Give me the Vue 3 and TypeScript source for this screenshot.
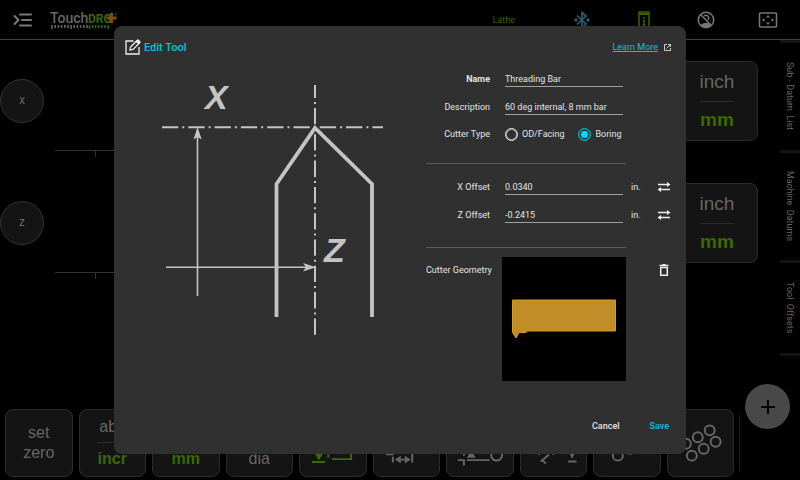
<script setup lang="ts">
import { ref } from 'vue'

interface Axis { id: string; label: string }

const axes: Axis[] = [
  { id: 'x', label: 'X' },
  { id: 'z', label: 'Z' },
]
const tabs = ['Sub - Datum  List', 'Machine  Datums', 'Tool  Offsets']

const name = ref('Threading Bar')
const description = ref('60 deg internal, 8 mm bar')
const cutterType = ref('boring')
const xOffset = ref('0.0340')
const zOffset = ref('-0.2415')
</script>

<template>
  <div class="app">
    <header class="topbar">
      <button class="plain menu" aria-label="Menu">
        <svg width="20" height="16" viewBox="0 0 20 16" fill="none" stroke="#7a7a7a" stroke-width="2" stroke-linecap="round">
          <path d="M7 2.500H18M9 8H18M7 13.500H18" />
          <path d="M1.500 4L5.500 8L1.500 12" />
        </svg>
      </button>
      <svg class="logo" width="70" height="20" viewBox="0 0 70 20" role="img" aria-label="TouchDRO">
        <text x="1" y="13" class="logo-touch">Touch</text>
        <text x="39" y="13" class="logo-dro">DRO</text>
        <path d="M62.500 3V13M57.500 8H67.500" stroke="#7a5010" stroke-width="3.200" />
        <circle cx="67" cy="4" r="1" fill="none" stroke="#444" stroke-width=".6" />
        <path d="M3 15V19M6.200 15V18M9.400 15V18M12.600 15V18M15.800 15V18M19 15V18M22 15V19M25.200 15V18M28.400 15V18M31.600 15V18M34.800 15V18M38 15V18" stroke="#666" stroke-width="1.600" />
        <path d="M40.500 15V19M43.600 15V18M46.700 15V18M49.800 15V18M52.900 15V18M56 15V18M59.200 15V19" stroke="#2f6a00" stroke-width="1.600" />
      </svg>
      <span class="mode">Lathe</span>
      <nav class="status">
        <button class="plain" aria-label="Bluetooth">
          <svg width="16" height="18" viewBox="0 0 16 18" fill="none" stroke="#285e70" stroke-width="1.700">
            <path d="M3 4.500L12 13L8 17V1.500L12 5L3 13.500" />
            <circle cx="2" cy="9" r=".8" /><circle cx="14" cy="9" r=".8" />
          </svg>
        </button>
        <button class="plain" aria-label="Device information">
          <svg width="14" height="20" viewBox="0 0 14 20" fill="none" stroke="#386300">
            <rect x="2" y="2" width="10" height="16" stroke-width="1.500" />
            <path d="M2 4H12" stroke-width="2" /><path d="M7 7V9M7 10V15M5.500 10.500H7M5.500 15H8.500" stroke-width="1.500" />
          </svg>
        </button>
        <button class="plain" aria-label="Account">
          <svg width="18" height="18" viewBox="0 0 18 18" fill="none" stroke="#777" stroke-width="1.500">
            <circle cx="9" cy="9" r="7.700" /><path d="M3.500 3.500L14.500 14.500" />
            <path d="M7 5Q9 3.500 11 5Q12.500 7 11 9" />
            <path d="M3.500 14Q9 9.500 14.500 14Q9 19 3.500 14Z" fill="#777" stroke="none" />
          </svg>
        </button>
        <button class="plain" aria-label="Full screen">
          <svg width="20" height="16" viewBox="0 0 20 16">
            <rect x="1.500" y="1" width="17" height="14" rx="1" fill="none" stroke="#777" stroke-width="1.500" />
            <path d="M10 3L12 5.500H8ZM10 13L12 10.500H8ZM4 8L6.500 6V10ZM16 8L13.500 6V10Z" fill="#777" />
          </svg>
        </button>
      </nav>
    </header>

    <div class="workspace">
      <main class="axes">
        <section v-for="axis in axes" :key="axis.id" class="axis">
          <button class="axis-name">{{ axis.label }}</button>
          <div class="scale"><span class="tick"></span></div>
          <button class="tile unit-tile"><span>inch</span><i></i><b>mm</b></button>
        </section>
      </main>
      <nav class="tabs">
        <button v-for="tab in tabs" :key="tab" class="tab">{{ tab }}</button>
      </nav>
    </div>

    <footer class="toolbar">
      <div class="tools">
        <button class="tile two-line"><span>set</span><span>zero</span></button>
        <button class="tile"><span>abs</span><i></i><b>incr</b></button>
        <button class="tile"><span>inch</span><i></i><b>mm</b></button>
        <button class="tile"><span>rad</span><i></i><span>dia</span></button>
        <button class="tile" aria-label="Touch off">
          <svg viewBox="1 1 66 66" fill="none" stroke="#3a6a00" stroke-width="2">
            <path d="M13 53.500H26M29.500 34V49M33 50.500H52.500V34M20 34V46" /><path d="M15.500 44H24.500L20 52Z" fill="#3a6a00" stroke="none" />
          </svg>
        </button>
        <button class="tile" aria-label="Offset">
          <svg viewBox="1 1 66 66" fill="none" stroke="#666" stroke-width="2">
            <path d="M13 45.500H21M20 48V54M39.500 45V54M25 51H36" /><path d="M22 51L28 47V55ZM38 51L32 47V55Z" fill="#666" stroke="none" />
          </svg>
        </button>
        <button class="tile" aria-label="Taper">
          <svg viewBox="1 1 66 66" fill="none" stroke="#666" stroke-width="2">
            <path d="M12 51.500H19M18 44V47M18 51V57M21 51.500H44" /><path d="M21 49L25 42H28V46L30 49Z" fill="#666" stroke="none" /><circle cx="51" cy="46.500" r="5.500" />
          </svg>
        </button>
        <button class="tile" aria-label="Angle">
          <svg viewBox="1 1 66 66" fill="none" stroke="#666" stroke-width="2">
            <path d="M16 42L20 46M21 53L29 46M23 52L26 55M30 42L34 46M48.500 53H57" /><path d="M49 43H56L52.500 50Z" fill="#666" stroke="none" />
          </svg>
        </button>
        <button class="tile" aria-label="Hole pattern">
          <svg viewBox="1 1 66 66" fill="none" stroke="#666" stroke-width="2">
            <circle cx="25" cy="47" r="5" /><circle cx="37" cy="40" r="5" /><circle cx="30" cy="28" r="5" />
          </svg>
        </button>
        <button class="tile" aria-label="Grid pattern">
          <svg viewBox="1 1 66 66" fill="none" stroke="#666" stroke-width="2">
            <circle cx="43" cy="21.500" r="5" /><circle cx="31" cy="28.500" r="5" /><circle cx="49" cy="33" r="5" />
            <circle cx="37" cy="40" r="5" /><circle cx="25" cy="47" r="5" /><circle cx="19" cy="35" r="5" />
          </svg>
        </button>
      </div>
      <div class="add-area"></div>
      <button class="fab" aria-label="Add">
        <svg width="14" height="14" viewBox="0 0 14 14"><path d="M7 0V14M0 7H14" stroke="#000" stroke-width="2" /></svg>
      </button>
    </footer>

    <div class="overlay">
      <form class="dialog" role="dialog" aria-labelledby="dialog-title" @submit.prevent>
        <div class="dialog-head">
          <svg width="16" height="16" viewBox="0 0 16 16" fill="none" stroke="#eee" stroke-width="1.300">
            <path d="M8.500 2H1V15H14V8" />
            <path d="M5 11L5.500 8L11.500 2L14 4.500L8 10.500Z" /><path d="M10.500 2.500L13 0L16 3L13.500 5.500Z" fill="#eee" stroke="none" />
          </svg>
          <h1 id="dialog-title">Edit Tool</h1>
          <a href="#learn-more">Learn More</a>
          <svg width="7" height="7" viewBox="0 0 7 7" fill="none" stroke="#ccc">
            <path d="M3 .5H.5V6.500H6.500V4M4 .5H6.500V3M6.500 .5L2.500 4.500" />
          </svg>
        </div>

        <div class="dialog-body">
          <svg class="diagram" width="225" height="258" viewBox="160 78 225 258" fill="none" stroke="#c4c4c4" role="img" aria-label="Boring tool X and Z offsets">
            <path d="M162 127.300H383" stroke-width="2" stroke-dasharray="16.300 4 2 4" />
            <path d="M315 85V335" stroke-width="2" stroke-dasharray="16.300 4 2 4" stroke-dashoffset="3.300" />
            <path d="M276.500 317V184L315 128L372 184V317" stroke-width="3.800" />
            <path d="M197.500 296V132M166 267.200H308" stroke-width="1.600" />
            <path d="M197.500 127L193.500 139.500L197.500 137L201.700 139.500ZM316 267.200L303 263L306 267.200L303 271.500Z" fill="#c4c4c4" stroke="none" />
            <text x="205" y="109">X</text>
            <text x="324" y="262">Z</text>
          </svg>

          <div class="fields">
            <div class="row">
              <label for="tool-name" class="strong">Name</label>
              <input id="tool-name" v-model="name" type="text" />
            </div>
            <div class="row">
              <label for="tool-description">Description</label>
              <input id="tool-description" v-model="description" type="text" />
            </div>
            <div class="row type-row" role="radiogroup" aria-labelledby="cutter-type">
              <span id="cutter-type" class="label">Cutter Type</span>
              <div class="choices">
                <label><input v-model="cutterType" type="radio" name="cutter" value="facing" />OD/Facing</label>
                <label><input v-model="cutterType" type="radio" name="cutter" value="boring" />Boring</label>
              </div>
            </div>
            <hr />
            <div class="row">
              <label for="x-offset">X Offset</label>
              <input id="x-offset" v-model="xOffset" type="text" />
              <span class="unit">in.</span>
              <button class="plain" type="button" aria-label="Swap X offset">
                <svg width="14" height="12" viewBox="0 0 14 12"><path d="M1 3.500H11M3 8.500H13" stroke="#eee" stroke-width="1.600" /><path d="M10 1L13.500 3.500L10 6ZM4 6L.5 8.500L4 11Z" fill="#eee" /></svg>
              </button>
            </div>
            <div class="row">
              <label for="z-offset">Z Offset</label>
              <input id="z-offset" v-model="zOffset" type="text" />
              <span class="unit">in.</span>
              <button class="plain" type="button" aria-label="Swap Z offset">
                <svg width="14" height="12" viewBox="0 0 14 12"><path d="M1 3.500H11M3 8.500H13" stroke="#eee" stroke-width="1.600" /><path d="M10 1L13.500 3.500L10 6ZM4 6L.5 8.500L4 11Z" fill="#eee" /></svg>
              </button>
            </div>
            <hr class="low" />
            <div class="row geometry">
              <span class="label">Cutter Geometry</span>
              <svg width="124" height="124" viewBox="0 0 124 124" role="img" aria-label="Cutter outline">
                <rect width="124" height="124" fill="#000" />
                <path d="M10.500 43H113.500V74H25L24 75.500H17L14 81L10.500 75.500Z" fill="#c08d27" stroke="#d79a20" />
              </svg>
              <button class="plain" type="button" aria-label="Delete geometry">
                <svg width="10" height="12" viewBox="0 0 10 12" fill="none" stroke="#eee" stroke-width="1.500"><path d="M.5 1.500H9.500" /><path d="M3.500 .7H6.500" /><path d="M1.700 3.500H8.300V11.200H1.700Z" /></svg>
              </button>
            </div>
          </div>
        </div>

        <div class="actions">
          <button class="plain" type="button">Cancel</button>
          <button class="plain save" type="submit">Save</button>
        </div>
      </form>
    </div>
  </div>
</template>

<style>
body {
  background: #000;
}
</style>

<style scoped>
* {
  box-sizing: border-box;
}
.app {
  display: flex;
  flex-direction: column;
  min-height: 100vh;
  font-family: Roboto, "Liberation Sans", sans-serif;
  font-size: 9px;
  color: #e4e4e4;
  background: #000;
}
svg {
  display: block;
  flex: none;
}
button {
  font: inherit;
  color: inherit;
  padding: 0;
  cursor: pointer;
}
.plain {
  display: grid;
  place-items: center;
  border: 0;
  background: none;
}
.topbar {
  display: flex;
  align-items: center;
  height: 40px;
  padding: 0 1px 0 13px;
  border-bottom: 1px solid #005a6c;
}
.logo {
  margin-left: 16px;
}
.logo-touch {
  font-size: 14px;
  font-weight: 500;
  fill: #666;
}
.logo-dro {
  font-size: 12px;
  font-weight: 700;
  fill: #2f6a00;
}
.mode {
  margin-left: auto;
  padding-right: 36px;
  color: #386300;
}
.status {
  display: grid;
  grid-template-columns: repeat(4, 62px);
}
.workspace {
  display: flex;
  flex: 1;
}
.axes {
  flex: 1;
}
.axis {
  display: flex;
  align-items: center;
  height: 122px;
  padding-right: 22px;
}
.axis-name {
  width: 44px;
  height: 44px;
  border: 1px solid #333;
  border-radius: 50%;
  background: #141414;
  color: #777;
}
.scale {
  flex: 1;
  align-self: flex-end;
  height: 12px;
  margin-left: 11px;
  padding-left: 40px;
  border-top: 1px solid #333;
}
.tick {
  display: block;
  width: 1px;
  height: 6px;
  background: #333;
}
.tile {
  display: flex;
  flex-direction: column;
  align-items: center;
  justify-content: center;
  min-width: 0;
  border: 1px solid #2c2c2c;
  border-radius: 8px;
  background: #141414;
  color: #666;
  font-family: "Liberation Sans", Arial, sans-serif;
  font-size: 16px;
  line-height: 20px;
}
.tile i {
  width: 30px;
  height: 1px;
  margin: 5px 0 6px;
  background: #2c2c2c;
}
.tile b {
  color: #3a6a00;
}
.tile svg {
  width: 100%;
}
.unit-tile {
  width: 82px;
  height: 80px;
  font-size: 19px;
}
.unit-tile i {
  width: 34px;
  margin: 9px 0 8px;
}
.tabs {
  width: 20px;
  display: flex;
  flex-direction: column;
}
.tab {
  width: 20px;
  height: 110px;
  border: 0;
  border-top: 3px solid #141414;
  background: none;
  color: #666;
  writing-mode: vertical-rl;
  white-space: pre;
}
.tab:last-child {
  height: 96px;
  border-bottom: 3px solid #141414;
}
.toolbar {
  position: relative;
  display: flex;
  padding: 0 0 3px 5px;
}
.tools {
  flex: 1;
  display: grid;
  grid-template-columns: repeat(10, 1fr);
  gap: 6px;
}
.tools .tile {
  height: 68px;
}
.add-area {
  width: 61px;
  margin: 6px 0 6px 5px;
  border-left: 1px solid #1c1c1c;
}
.fab {
  position: absolute;
  right: 10px;
  bottom: 51px;
  display: grid;
  place-items: center;
  width: 45px;
  height: 45px;
  border: 0;
  border-radius: 50%;
  background: #484848;
}
.overlay {
  position: fixed;
  inset: 0;
  display: grid;
  align-items: center;
  padding: 26px 114px;
}
.dialog {
  border-radius: 8px;
  background: #303030;
  padding: 7px 10px 14px 11px;
}
.dialog-head {
  display: flex;
  align-items: center;
  height: 28px;
  padding-right: 5px;
  margin-bottom: 4px;
}
h1 {
  margin: 0 auto 0 3px;
  font-size: 11px;
  font-weight: 500;
  color: #00c4de;
}
a {
  margin-right: 6px;
  color: #00c4de;
}
.dialog-body {
  display: flex;
  justify-content: space-between;
}
.diagram {
  margin: 13px 0 0 35px;
}
.diagram text {
  font: italic bold 34px "Liberation Sans", Arial, sans-serif;
  fill: #c4c4c4;
  stroke: none;
}
.fields {
  width: 250px;
}
.row {
  display: grid;
  grid-template-columns: 76px 124px 1fr 24px;
  align-items: center;
  min-height: 28px;
}
.row.type-row {
  min-height: 26px;
}
.row > label,
.row > .label {
  padding-right: 12px;
  text-align: right;
  white-space: nowrap;
}
.row > .strong {
  font-weight: 700;
}
.row > input {
  min-width: 0;
  height: 16px;
  margin: 0 3px;
  padding: 1px 0 0;
  border: 0;
  border-bottom: 1px solid #a0a0a0;
  outline: 0;
  background: none;
  color: inherit;
  font: inherit;
}
.choices {
  display: flex;
  gap: 14px;
  padding-left: 3px;
  white-space: nowrap;
}
.choices label {
  display: flex;
  align-items: center;
  gap: 4px;
}
.choices input {
  appearance: none;
  display: grid;
  place-items: center;
  width: 13px;
  height: 13px;
  margin: 0;
  border: 1px solid #eee;
  border-radius: 50%;
  box-shadow: inset 0 0 0 1px #999;
}
.choices input:checked {
  border-color: #00c4de;
  box-shadow: inset 0 0 0 1px #1a6a75;
}
.choices input:checked::after {
  content: "";
  width: 7px;
  height: 7px;
  border-radius: 50%;
  background: #00dcff;
}
hr {
  width: 200px;
  height: 1px;
  margin: 16px 0 9px;
  border: 0;
  background: #5a5a5a;
}
.low {
  margin-top: 18px;
}
.unit {
  padding-left: 5px;
}
.geometry {
  align-items: start;
}
.geometry .label,
.geometry .plain {
  height: 26px;
  line-height: 26px;
}
.geometry .plain {
  grid-column: 4;
}
.actions {
  display: flex;
  justify-content: flex-end;
  gap: 30px;
  height: 28px;
  margin-top: 31px;
  padding-right: 7px;
  font-weight: 500;
}
.save {
  color: #00c4de;
}
</style>
